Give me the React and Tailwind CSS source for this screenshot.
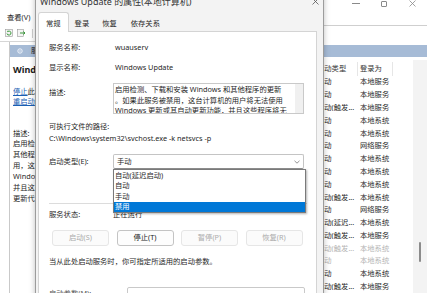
import React from "react";

const rows = [
  ["手动", "本地服务"],
  ["手动", "本地服务"],
  ["手动(触发...", "本地服务"],
  ["手动", "本地系统"],
  ["手动", "本地系统"],
  ["手动", "网络服务"],
  ["手动", "本地系统"],
  ["手动", "本地系统"],
  ["手动", "本地系统"],
  ["手动(触发...", "本地系统"],
  ["手动", "网络服务"],
  ["自动(延迟...", "本地系统"],
  ["手动(触发...", "本地服务"],
  ["手动(触发...", "本地系统", true],
  ["手动", "本地系统", true],
  ["手动", "本地系统"],
  ["手动(触发...", "本地服务"],
];

const descLines = [
  "启用检测、下载和安装 Windows 和",
  "其他程序的更新。如果此服务被禁",
  "用，这台计算机的用户将无法使用",
  "Windows 更新或其自动更新功能，",
  "并且这些程序将无法使用 Windows",
  "更新代理(WUA) API。",
];

function ServicesWindow() {
  return (
    <div className="flex flex-col w-full h-full">
      {/* title bar controls */}
      <div className="flex h-[7px] justify-end pr-[1px]">
        <div className="w-[28px] flex items-center justify-center">
          <div className="w-[8px] h-px bg-[#8a8a8a]" />
        </div>
        <div className="w-[28px] flex items-center justify-center">
          <div className="w-[6px] h-[6px] border border-[#8a8a8a] rounded-[1px]" />
        </div>
        <div className="w-[28px] flex items-center justify-center">
          <svg width="7" height="7" viewBox="0 0 7 7">
            <path d="M0.5 0.5L6.5 6.5M6.5 0.5L0.5 6.5" stroke="#8a8a8a" strokeWidth="0.8" />
          </svg>
        </div>
      </div>

      {/* menu */}
      <div className="flex h-[18px] items-center pt-[4px] pl-[7px]">查看(V)</div>

      {/* toolbar */}
      <div className="flex h-[17px]">
        <div className="w-[35px] flex items-center pl-[5px] gap-[4px] border-b border-[#d6d6d6]">
          <svg width="8" height="8" viewBox="0 0 8 8">
            <rect x="0.5" y="0.5" width="7" height="7" fill="#f4f4f4" stroke="#9a9a9a" strokeWidth="0.6" />
            <path d="M2 4.5a2 2 0 1 0 1-2.2" fill="none" stroke="#3a9a3a" strokeWidth="1" />
            <path d="M2.2 1.4L3.4 2.4L2.2 3.2Z" fill="#3a9a3a" />
          </svg>
          <svg width="9" height="8" viewBox="0 0 9 8">
            <rect x="0.5" y="0.5" width="6" height="7" fill="#f4f4f4" stroke="#9a9a9a" strokeWidth="0.6" />
            <path d="M3 4H8M6.5 2.5L8 4L6.5 5.5" fill="none" stroke="#3a9a3a" strokeWidth="1" />
          </svg>
          <div className="ml-[2px] w-px h-[9px] bg-[#cfcfcf]" />
        </div>
        <div className="flex-1 border-t border-[#cfcfcf]" />
      </div>

      {/* body */}
      <div className="flex flex-1 min-h-0">
        <div className="w-[10px] border-r border-[#c9c9c9] bg-white" />
        <div className="flex flex-col flex-1 min-w-0 pt-[3px]">
          <div className="flex h-[12px] items-center gap-[8px] pl-[7px] bg-[#a6bbd6]">
            <svg width="6" height="6" viewBox="0 0 6 6">
              <circle cx="3" cy="3" r="2.2" fill="none" stroke="#eef3fa" strokeWidth="1" />
              <circle cx="3" cy="3" r="0.7" fill="#eef3fa" />
            </svg>
            <span className="text-[#1a1a1a]">服务(本地)</span>
          </div>

          <div className="flex flex-1 min-h-0">
            {/* detail panel */}
            <div className="w-[150px] pl-[3px] whitespace-nowrap overflow-hidden">
              <div className="mt-[7px] text-[9px] font-bold leading-[12px] text-[#1a1a1a]">Windows Update</div>
              <div className="mt-[10px] leading-[10px]">
                <span className="text-[#1a5fb4] underline">停止</span>此服务
              </div>
              <div className="leading-[10px]">
                <span className="text-[#1a5fb4] underline">重启动</span>此服务
              </div>
              <div className="mt-[22px] leading-[10px]">描述:</div>
              {descLines.map((l) => (
                <div key={l} className="leading-[11px]">{l}</div>
              ))}
            </div>

            {/* list */}
            <div className="ml-auto w-[110px] flex">
              <div className="flex-1 flex flex-col pt-[5px] whitespace-nowrap">
                <div className="flex h-[13.6px] items-center text-[#333]">
                  <div className="w-[41px] h-full flex items-center border-r border-[#e6e6e6]">启动类型</div>
                  <div className="w-[35px] h-full flex items-center pl-[2px] border-r border-[#e6e6e6]">登录为</div>
                </div>
                {rows.map(([t, l, faded], i) => (
                  <div
                    key={i}
                    className={`flex h-[12.8px] items-center ${faded ? "text-[#b4b4b4]" : "text-[#1f1f1f]"}`}
                  >
                    <div className="w-[41px] overflow-hidden">{t}</div>
                    <div className="w-[35px] pl-[2px]">{l}</div>
                  </div>
                ))}
              </div>
              <div className="w-[14px] mt-[3px] bg-[#f3f3f3]">
                <div className="mt-[182px] ml-[6px] w-[2px] h-[20px] rounded-full bg-[#8c8c8c]" />
              </div>
            </div>
          </div>
        </div>
      </div>
    </div>
  );
}

function Button({ children, enabled }) {
  return (
    <div
      className={`w-[57px] h-[16px] flex items-center justify-center rounded-[3px] border ${
        enabled
          ? "border-[#c4c4c4] bg-[#fdfdfd] text-[#1a1a1a]"
          : "border-[#e6e6e6] bg-[#fbfbfb] text-[#ababab]"
      }`}
    >
      {children}
    </div>
  );
}

function PropertiesDialog() {
  return (
    <div className="absolute left-[35px] top-[-9px] w-[289px] h-[320px] flex flex-col bg-[#f3f3f3] border border-[#9c9c9c] shadow-[0_0_6px_rgba(0,0,0,0.25)]">
      <div className="flex h-[18px] items-center justify-between pl-[4px] pr-[4px] text-[9px] text-[#333]">
        <span>Windows Update 的属性(本地计算机)</span>
        <svg width="7" height="7" viewBox="0 0 7 7">
          <path d="M0.5 0.5L6.5 6.5M6.5 0.5L0.5 6.5" stroke="#555" strokeWidth="0.8" />
        </svg>
      </div>

      <div className="flex h-[21px] items-end pl-[2px]">
        <div className="relative z-10 -mb-px h-[20px] px-[7px] pt-[3px] flex items-center bg-white border border-b-0 border-[#d4d4d4] rounded-t-[3px]">
          常规
        </div>
        <div className="h-[18px] px-[6px] pt-[3px] flex items-center">登录</div>
        <div className="h-[18px] px-[7px] pt-[3px] flex items-center">恢复</div>
        <div className="h-[18px] px-[7px] pt-[3px] flex items-center">依存关系</div>
      </div>

      <div className="flex-1 ml-[2px] mr-[6px] bg-white border border-[#d4d4d4] pl-[10px] flex flex-col whitespace-nowrap">
        <div className="mt-[10px] flex h-[12px] items-center">
          <div className="w-[66px]">服务名称:</div>
          <div>wuauserv</div>
        </div>
        <div className="mt-[8px] flex h-[12px] items-center">
          <div className="w-[66px]">显示名称:</div>
          <div>Windows Update</div>
        </div>
        <div className="mt-[9px] flex items-start">
          <div className="w-[64px] pt-[4px] leading-[10px]">描述:</div>
          <div className="w-[191px] h-[31px] flex border border-[#c9c9c9] overflow-hidden">
            <div className="flex-1 pl-[1px] leading-[10.5px] overflow-hidden">
              <div>启用检测、下载和安装 Windows 和其他程序的更新</div>
              <div>。如果此服务被禁用，这台计算机的用户将无法使用</div>
              <div>Windows 更新或其自动更新功能，并且这些程序将无</div>
            </div>
            <div className="w-[8px] bg-[#f0f0f0]" />
          </div>
        </div>
        <div className="mt-[7px] flex h-[12px] items-center">可执行文件的路径:</div>
        <div className="flex h-[12px] items-center">C:\Windows\system32\svchost.exe -k netsvcs -p</div>

        <div className="mt-[9px] flex items-center">
          <div className="w-[64px]">启动类型(E):</div>
          <div className="relative w-[191px] h-[15px] flex items-center justify-between pl-[3px] pr-[3px] border border-[#c4c4c4] border-b-[#8f8f8f] rounded-[2px]">
            <span>手动</span>
            <svg width="6" height="4" viewBox="0 0 6 4">
              <path d="M0.5 0.8L3 3.2L5.5 0.8" fill="none" stroke="#777" strokeWidth="0.8" />
            </svg>
            <div className="absolute left-[-1px] top-full mt-px z-10 w-[193px] flex flex-col bg-white border border-[#7a7a7a] shadow-[1px_1px_2px_rgba(0,0,0,0.3)]">
              <div className="h-[10.5px] flex items-center pl-[1px]">自动(延迟启动)</div>
              <div className="h-[10.5px] flex items-center pl-[1px]">自动</div>
              <div className="h-[10.5px] flex items-center pl-[1px]">手动</div>
              <div className="h-[10.5px] flex items-center pl-[1px] bg-[#0078d7] text-white">禁用</div>
            </div>
          </div>
        </div>

        <div className="mt-[34px] w-[258px] h-px bg-[#dcdcdc]" />

        <div className="mt-[5px] flex h-[12px] items-center">
          <div className="w-[64px]">服务状态:</div>
          <div>正在运行</div>
        </div>

        <div className="mt-[9px] ml-[3px] flex gap-[7.5px]">
          <Button>启动(S)</Button>
          <Button enabled>停止(T)</Button>
          <Button>暂停(P)</Button>
          <Button>恢复(R)</Button>
        </div>

        <div className="mt-[10px] flex h-[12px] items-center">当从此处启动服务时，你可指定所适用的启动参数。</div>

        <div className="mt-[19px] flex items-center">
          <div className="w-[78px] text-[#555]">启动参数(M):</div>
          <div className="w-[178px] h-[14px] border border-[#c9c9c9] rounded-[2px]" />
        </div>
      </div>
    </div>
  );
}

export default function App() {
  return (
    <div className="relative w-[427px] h-[293px] overflow-hidden bg-white text-[7.3px] leading-none text-[#1f1f1f] font-['Noto_Sans','Noto_Sans_CJK_SC',sans-serif]">
      <ServicesWindow />
      <PropertiesDialog />
    </div>
  );
}
